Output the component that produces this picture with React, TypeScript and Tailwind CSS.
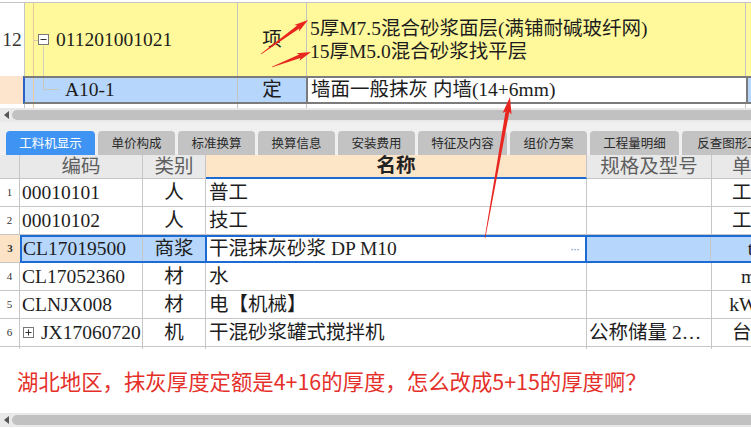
type Pt = [number, number]

const serif = "font-['Liberation_Serif','Noto_Sans_CJK_SC',serif]"

// tapered annotation arrow, thin at the tail and wider at the head
function arrowPoints(tail: Pt, tip: Pt, w0: number, w1: number, headLen: number, headW: number) {
  const dx = tip[0] - tail[0]
  const dy = tip[1] - tail[1]
  const len = Math.hypot(dx, dy)
  const ux = dx / len
  const uy = dy / len
  const nx = -uy
  const ny = ux
  const bx = tip[0] - ux * headLen
  const by = tip[1] - uy * headLen
  const pts: Pt[] = [
    [tail[0] + (nx * w0) / 2, tail[1] + (ny * w0) / 2],
    [bx + (nx * w1) / 2, by + (ny * w1) / 2],
    [bx - ux * 2 + (nx * headW) / 2, by - uy * 2 + (ny * headW) / 2],
    tip,
    [bx - ux * 2 - (nx * headW) / 2, by - uy * 2 - (ny * headW) / 2],
    [bx - (nx * w1) / 2, by - (ny * w1) / 2],
    [tail[0] - (nx * w0) / 2, tail[1] - (ny * w0) / 2],
  ]
  return pts.map((p) => p.map((v) => v.toFixed(1)).join(',')).join(' ')
}

function TreeBox({ minus }: { minus?: boolean }) {
  return (
    <svg width="11" height="11" viewBox="0 0 11 11" className="shrink-0">
      <rect x="0.5" y="0.5" width="10" height="10" fill="white" stroke="#777" />
      <line x1="2.5" y1="5.5" x2="8.5" y2="5.5" stroke="#333" />
      {!minus && <line x1="5.5" y1="2.5" x2="5.5" y2="8.5" stroke="#333" />}
    </svg>
  )
}

function Scrollbar() {
  return (
    <div className="h-[14px] bg-[#e9e9e9] flex items-center">
      <div className="w-[12px] flex items-center justify-center">
        <svg width="5" height="8" viewBox="0 0 5 8">
          <polygon points="5,0 0,4 5,8" fill="#555" />
        </svg>
      </div>
      <div className="flex-1 h-[10px] bg-[#c1c1c1] rounded-l-full" />
    </div>
  )
}

const tabs = [
  { label: '工料机显示', w: 'w-[89px]', active: true },
  { label: '单价构成', w: 'w-[77px]' },
  { label: '标准换算', w: 'w-[77px]' },
  { label: '换算信息', w: 'w-[77px]' },
  { label: '安装费用', w: 'w-[77px]' },
  { label: '特征及内容', w: 'w-[89px]' },
  { label: '组价方案', w: 'w-[77px]' },
  { label: '工程量明细', w: 'w-[89px]' },
  { label: '反查图形工程量', w: 'w-[118px]' },
]

type Row = {
  n: number
  code: string
  cat: string
  name: string
  spec: string
  unit: string
  sel?: boolean
  plus?: boolean
}

const rows: Row[] = [
  { n: 1, code: '00010101', cat: '人', name: '普工', spec: '', unit: '工日' },
  { n: 2, code: '00010102', cat: '人', name: '技工', spec: '', unit: '工日' },
  { n: 3, code: 'CL17019500', cat: '商浆', name: '干混抹灰砂浆 DP M10', spec: '', unit: 't', sel: true },
  { n: 4, code: 'CL17052360', cat: '材', name: '水', spec: '', unit: 'm³' },
  { n: 5, code: 'CLNJX008', cat: '材', name: '电【机械】', spec: '', unit: 'kW·h' },
  { n: 6, code: 'JX17060720', cat: '机', name: '干混砂浆罐式搅拌机', spec: '公称储量 2…', unit: '台班', plus: true },
]

function GridRow({ r }: { r: Row }) {
  if (r.sel) {
    return (
      <div className="flex h-[28px]">
        <div className="w-[20px] shrink-0 bg-[#fde3c6] border-b border-[#c6c6c6] flex items-center justify-center text-[11px] text-[#333] font-bold">
          {r.n}
        </div>
        <div className="flex flex-1 border-y-2 border-l-2 border-[#1c6bd4]">
          <div className="w-[121px] shrink-0 bg-[#b6d6fb] border-r border-[#c6c6c6] flex items-center pl-[1px]">{r.code}</div>
          <div className="w-[62px] shrink-0 bg-[#b6d6fb] flex items-center justify-center">{r.cat}</div>
          <div className="w-[382px] shrink-0 bg-white border-x-2 border-[#1c6bd4] flex items-center justify-between pl-[2px] pr-[6px]">
            <span>{r.name}</span>
            <span className="text-[12px] text-[#6b8fc4] tracking-[-1px] font-['Liberation_Sans',sans-serif]">···</span>
          </div>
          <div className="w-[124px] shrink-0 bg-[#b6d6fb] border-r border-[#c6c6c6]" />
          <div className="w-[79px] shrink-0 bg-[#b6d6fb] flex items-center justify-center">{r.unit}</div>
        </div>
      </div>
    )
  }
  return (
    <div className="flex h-[28px] border-b border-[#c6c6c6]">
      <div className="w-[20px] shrink-0 border-r border-[#c6c6c6] flex items-center justify-center text-[11px] text-[#333]">{r.n}</div>
      <div className="w-[123px] shrink-0 border-r border-[#c6c6c6] flex items-center pl-[2px]">
        {r.plus && (
          <span className="mr-[7px] ml-[1px] flex">
            <TreeBox />
          </span>
        )}
        {r.code}
      </div>
      <div className="w-[63px] shrink-0 border-r border-[#c6c6c6] flex items-center justify-center">{r.cat}</div>
      <div className="w-[381px] shrink-0 border-r border-[#c6c6c6] flex items-center pl-[3px]">{r.name}</div>
      <div className="w-[125px] shrink-0 border-r border-[#c6c6c6] flex items-center pl-[2px] whitespace-nowrap overflow-hidden">
        {r.spec}
      </div>
      <div className="w-[79px] shrink-0 flex items-center justify-center whitespace-nowrap">{r.unit}</div>
    </div>
  )
}

export default function App() {
  return (
    <div className={`relative w-[751px] h-[428px] overflow-hidden bg-white text-[19.5px] leading-none text-[#1d1d1d] ${serif}`}>
      {/* 上部 清单/定额 */}
      <div className="h-[3px] border-b border-[#c4c4c4]" />
      <div className="flex h-[73px] w-[800px]">
        <div className="w-[25px] shrink-0 border-r border-[#c4c4c4] flex items-center justify-center text-[#333]">12</div>
        <div className="relative w-[213px] shrink-0 bg-[#fff99b] border-r border-[#c4c4c4] flex items-center pl-[13px]">
          <svg className="absolute inset-0" width="212" height="73">
            <line x1="8.5" y1="0" x2="8.5" y2="73" stroke="#eec79a" />
            <line x1="8.5" y1="37.5" x2="13" y2="37.5" stroke="#d9c8a8" />
            <line x1="18.5" y1="43" x2="18.5" y2="73" stroke="#d4d0c0" />
          </svg>
          <span className="relative flex mr-[7px]">
            <TreeBox minus />
          </span>
          <span className="relative">011201001021</span>
        </div>
        <div className="w-[69px] shrink-0 bg-[#fff99b] border-r border-[#c4c4c4] flex items-center justify-center">项</div>
        <div className="w-[439px] shrink-0 bg-[#fff99b] border-r border-[#c4c4c4] flex flex-col justify-center pl-[3px] leading-[23px]">
          <div>5厚M7.5混合砂浆面层(满铺耐碱玻纤网)</div>
          <div>15厚M5.0混合砂浆找平层</div>
        </div>
        <div className="flex-1 bg-[#fff99b]" />
      </div>
      <div className="flex h-[28px] w-[800px]">
        <div className="w-[23px] shrink-0 bg-[#fde4cc]" />
        <div className="flex flex-1 border-y-2 border-[#7b7b7b] border-l-2 border-l-[#2a62c4]">
          <div className="relative w-[213px] shrink-0 bg-[#b6d6fb] border-r border-[#c4c4c4] flex items-center pl-[40px]">
            <svg className="absolute inset-0" width="212" height="24">
              <line x1="8.5" y1="0" x2="8.5" y2="24" stroke="#eec79a" />
              <line x1="18.5" y1="0" x2="18.5" y2="11.5" stroke="#c9c6bb" />
              <line x1="18.5" y1="11.5" x2="34" y2="11.5" stroke="#c9c6bb" />
            </svg>
            <span className="relative">A10-1</span>
          </div>
          <div className="w-[68px] shrink-0 bg-[#b6d6fb] flex items-center justify-center">定</div>
          <div className="w-[442px] shrink-0 bg-white border-x-2 border-[#7b7b7b] flex items-center pl-[3px]">
            墙面一般抹灰 内墙(14+6mm)
          </div>
          <div className="flex-1 bg-[#b6d6fb]" />
        </div>
      </div>
      <div className="flex h-[4px]">
        <div className="w-[25px] shrink-0 border-r border-[#c4c4c4]" />
        <div className="w-[213px] shrink-0 border-r border-[#c4c4c4] pl-[8px]">
          <div className="w-px h-full bg-[#eec79a]" />
        </div>
        <div className="w-[69px] shrink-0 border-r border-[#c4c4c4]" />
        <div className="w-[439px] shrink-0 border-r border-[#c4c4c4]" />
      </div>
      <Scrollbar />

      {/* 页签 */}
      <div className="h-[9px] bg-[#f0f0f0]" />
      <div className="flex h-[24px] bg-[#f0f0f0] pl-[6px] gap-[3px] font-['Noto_Sans_CJK_SC',sans-serif] text-[12.5px]">
        {tabs.map((t) => (
          <div
            key={t.label}
            className={`${t.w} shrink-0 rounded-t-[4px] flex items-center justify-center whitespace-nowrap ${
              t.active ? 'bg-[#3f94f3] text-white' : 'bg-[#c3c3c3] text-[#2a2a2a]'
            }`}
          >
            {t.label}
          </div>
        ))}
      </div>

      {/* 工料机 表格 */}
      <div className="flex h-[24px] bg-[#e9e9e9] text-[#5f5f5f] w-[800px]">
        <div className="w-[20px] shrink-0 border-r border-b border-[#c6c6c6]" />
        <div className="w-[123px] shrink-0 border-r border-b border-[#c6c6c6] flex items-center justify-center">编码</div>
        <div className="w-[63px] shrink-0 border-r border-b border-[#c6c6c6] flex items-center justify-center">类别</div>
        <div className="w-[381px] shrink-0 border-r border-[#c6c6c6] border-b-2 border-b-[#1c6bd4] bg-[#fde5c8] flex items-center justify-center font-bold text-[#222]">
          名称
        </div>
        <div className="w-[125px] shrink-0 border-r border-b border-[#c6c6c6] flex items-center justify-center">规格及型号</div>
        <div className="w-[79px] shrink-0 border-b border-[#c6c6c6] flex items-center justify-center">单位</div>
      </div>
      <div className="w-[800px]">
        {rows.map((r) => (
          <GridRow key={r.n} r={r} />
        ))}
        <div className="flex h-[2px]">
          <div className="w-[20px] shrink-0 border-r border-[#c6c6c6]" />
          <div className="w-[123px] shrink-0 border-r border-[#c6c6c6]" />
          <div className="w-[63px] shrink-0 border-r border-[#c6c6c6]" />
          <div className="w-[381px] shrink-0 border-r border-[#c6c6c6]" />
          <div className="w-[125px] shrink-0 border-r border-[#c6c6c6]" />
        </div>
      </div>

      {/* 提问 */}
      <div className="h-[64px] flex items-center pl-[17px] text-[21.4px] text-[#e5302a] font-['Noto_Sans_CJK_SC',sans-serif]">
        湖北地区，抹灰厚度定额是4+16的厚度，怎么改成5+15的厚度啊？
      </div>
      <Scrollbar />

      {/* 标注箭头 */}
      <svg className="absolute inset-0 pointer-events-none" width="751" height="428">
        <polygon points={arrowPoints([261, 54], [308, 20], 0.6, 3.6, 12, 8)} fill="#e8261f" />
        <polygon points={arrowPoints([272, 67], [311, 52], 0.6, 3.6, 12, 8)} fill="#e8261f" />
        <polygon points={arrowPoints([485, 238], [510, 97], 0.6, 3.8, 15, 9)} fill="#e8261f" />
      </svg>
    </div>
  )
}
